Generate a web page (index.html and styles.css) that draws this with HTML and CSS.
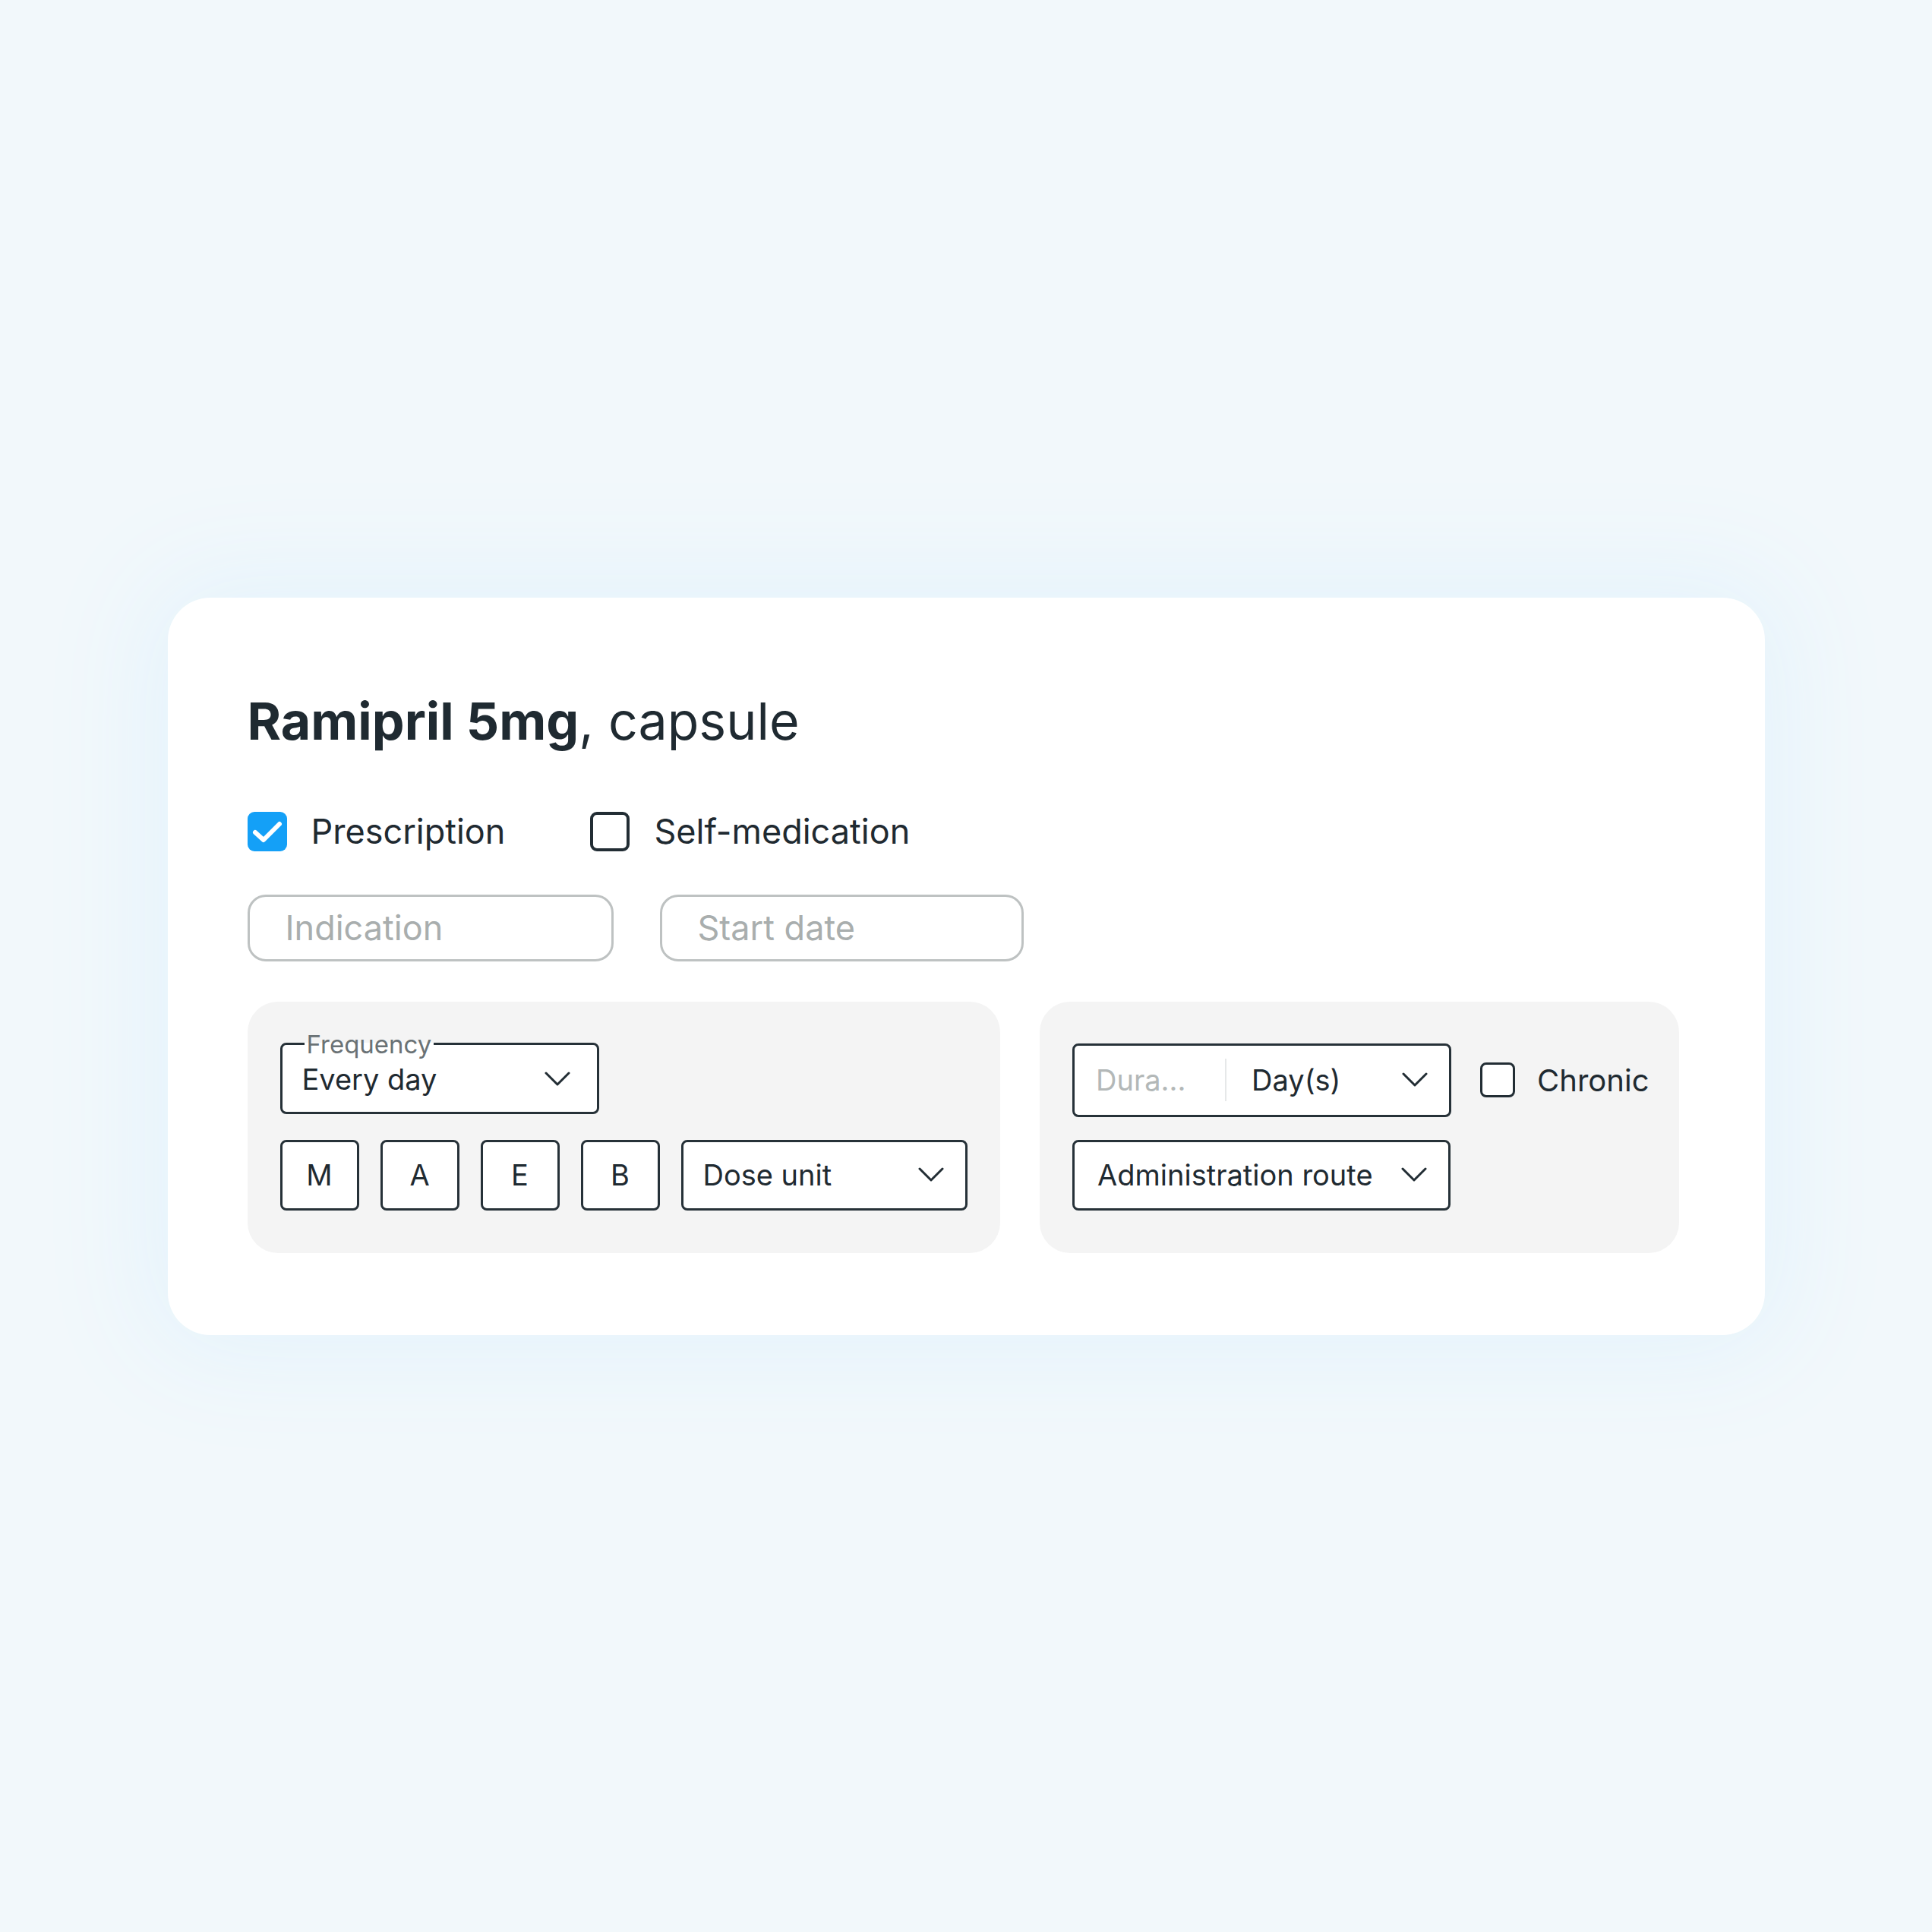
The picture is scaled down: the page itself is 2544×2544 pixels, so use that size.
FILE: index.html
```html
<!DOCTYPE html>
<html lang="en">
<head>
    <meta charset="UTF-8">
    <meta name="viewport" content="width=device-width, initial-scale=1.0">
    <title>Ramipril 5mg, capsule</title>
    <link rel="stylesheet" href="styles.css">
</head>
<body>
    <div class="card">
        <h1 class="title"><strong>Ramipril 5mg</strong>, capsule</h1>

        <div class="kind-row">
            <label class="check-option">
                <span class="box box-checked">
                    <svg viewBox="0 0 52 52" width="52" height="52"><path d="M10 27 L21 37 L42 16" fill="none" stroke="#fff" stroke-width="6" stroke-linecap="round" stroke-linejoin="round"/></svg>
                </span>
                Prescription
            </label>
            <label class="check-option">
                <span class="box"></span>
                Self-medication
            </label>
        </div>

        <div class="input-row">
            <div class="text-input indication">Indication</div>
            <div class="text-input start-date">Start date</div>
        </div>

        <div class="panels">
            <div class="panel dosage">
                <fieldset class="frequency">
                    <legend>Frequency</legend>
                    <div class="select-inner">
                        <span>Every day</span>
                        <svg class="chevron" viewBox="0 0 34 20"><path d="M2 2 L17 17 L32 2"/></svg>
                    </div>
                </fieldset>
                <div class="dose-row">
                    <button class="moment">M</button>
                    <button class="moment">A</button>
                    <button class="moment">E</button>
                    <button class="moment">B</button>
                    <div class="select dose-unit">
                        <span>Dose unit</span>
                        <svg class="chevron" viewBox="0 0 34 20"><path d="M2 2 L17 17 L32 2"/></svg>
                    </div>
                </div>
            </div>

            <div class="panel duration">
                <div class="duration-row">
                    <div class="combo">
                        <span class="combo-value">Dura...</span>
                        <span class="combo-divider"></span>
                        <div class="combo-unit">
                            <span>Day(s)</span>
                            <svg class="chevron" viewBox="0 0 34 20"><path d="M2 2 L17 17 L32 2"/></svg>
                        </div>
                    </div>
                    <label class="chronic">
                        <span class="box small"></span>
                        Chronic
                    </label>
                </div>
                <div class="select route">
                    <span>Administration route</span>
                    <svg class="chevron" viewBox="0 0 34 20"><path d="M2 2 L17 17 L32 2"/></svg>
                </div>
            </div>
        </div>
    </div>
</body>
</html>
```

FILE: styles.css
```css
body {
    margin: 0;
    min-height: 100vh;
    display: flex;
    align-items: center;
    justify-content: center;
    background-color: #f2f8fb;
    font-family: Inter, "Noto Sans", sans-serif;
    color: #1f2a31;
}
.card {
    box-sizing: border-box;
    width: 2103px;
    padding: 121px 113px 108px 105px;
    background-color: #fff;
    border-radius: 56px;
    box-shadow: 0 0 140px 30px #e5f3fc;
}
.title {
    margin: 0;
    font-size: 68px;
    line-height: 82px;
    font-weight: 400;
}
.title strong {
    font-weight: 700;
}
.kind-row {
    display: flex;
    align-items: center;
    gap: 112px;
    margin-top: 79px;
}
.check-option {
    display: flex;
    align-items: center;
    gap: 32px;
    font-size: 45px;
    line-height: 52px;
}
.box {
    box-sizing: border-box;
    width: 52px;
    height: 52px;
    border: 4px solid #222d34;
    border-radius: 9px;
    background-color: #fff;
}
.box-checked {
    border: none;
    background-color: #14a0f7;
}
.box svg {
    display: block;
}
.input-row {
    display: flex;
    gap: 61px;
    margin-top: 57px;
}
.text-input {
    box-sizing: border-box;
    height: 88px;
    display: flex;
    align-items: center;
    padding-left: 47px;
    border: 3px solid #bec2c2;
    border-radius: 24px;
    font-size: 45px;
    color: #a9aeae;
}
.indication {
    width: 482px;
}
.start-date {
    width: 479px;
}
.panels {
    display: flex;
    gap: 52px;
    margin-top: 53px;
}
.panel {
    background-color: #f4f4f4;
    border-radius: 40px;
}
.dosage {
    flex: 1;
    padding: 53px 43px 56px;
}
.duration {
    padding: 55px 39px 55px 43px;
}
.frequency {
    box-sizing: border-box;
    width: 420px;
    margin: 0;
    padding: 0;
    border: 3px solid #263138;
    border-radius: 8px;
    background-color: #fff;
}
.frequency legend {
    margin-left: 29px;
    padding: 0 3px;
    font-size: 33px;
    line-height: 6px;
    color: #6a7275;
}
.select-inner {
    height: 86px;
    display: flex;
    align-items: center;
    justify-content: space-between;
    padding: 0 35px 0 26px;
    font-size: 38px;
}
.chevron {
    width: 34px;
    height: 20px;
    fill: none;
    stroke: #222d34;
    stroke-width: 3;
    stroke-linecap: round;
    stroke-linejoin: round;
}
.dose-row {
    display: flex;
    gap: 28px;
    margin-top: 34px;
}
.moment {
    box-sizing: border-box;
    width: 104px;
    height: 93px;
    padding: 0;
    border: 3px solid #263138;
    border-radius: 8px;
    background-color: #fff;
    font-family: inherit;
    font-size: 38px;
    color: #1f2a31;
}
.select {
    box-sizing: border-box;
    height: 93px;
    display: flex;
    align-items: center;
    justify-content: space-between;
    border: 3px solid #263138;
    border-radius: 8px;
    background-color: #fff;
    font-size: 38px;
}
.dose-unit {
    flex: 1;
    padding: 0 28px 0 26px;
}
.duration-row {
    display: flex;
    align-items: center;
}
.combo {
    box-sizing: border-box;
    width: 499px;
    height: 97px;
    display: flex;
    align-items: center;
    border: 3px solid #263138;
    border-radius: 8px;
    background-color: #fff;
    font-size: 38px;
}
.combo-value {
    width: 170px;
    padding-left: 28px;
    color: #b3b8b8;
}
.combo-divider {
    width: 2px;
    height: 56px;
    background-color: #e6e8e9;
}
.combo-unit {
    flex: 1;
    display: flex;
    align-items: center;
    justify-content: space-between;
    padding: 0 28px 0 33px;
}
.chronic {
    display: flex;
    align-items: center;
    gap: 29px;
    margin-left: 38px;
    font-size: 40px;
}
.box.small {
    width: 46px;
    height: 46px;
    border-width: 3px;
    border-radius: 8px;
}
.route {
    width: 498px;
    margin-top: 30px;
    padding: 0 28px 0 30px;
}
```
